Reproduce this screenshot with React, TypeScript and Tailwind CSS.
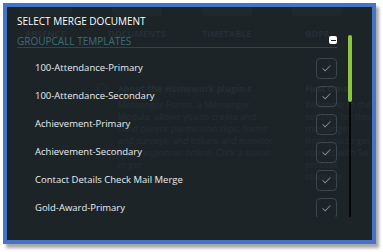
import { Check } from 'lucide-react';

const templates = [
  '100-Attendance-Primary',
  '100-Attendance-Secondary',
  'Achievement-Primary',
  'Achievement-Secondary',
  'Contact Details Check Mail Merge',
  'Gold-Award-Primary',
];

const font = { fontFamily: '"Open Sans", "Noto Sans", sans-serif' };

// faint page that shows through the dialog
const BackgroundPage = () => (
  <div className="absolute inset-0 text-[#252f35] pointer-events-none">
    <div className="flex gap-[40px] pl-[13px] pt-0">
      <div className="w-[52px] h-[9px] bg-[#1f282d] rounded-b-sm" />
      <div className="w-[50px] h-[9px] bg-[#1f282d] rounded-b-sm" />
      <div className="w-[50px] h-[9px] bg-[#1f282d] rounded-b-sm" />
      <div className="w-[50px] h-[9px] bg-[#1f282d] rounded-b-sm" />
    </div>
    <div className="flex text-[9px] font-bold uppercase pl-[18px] mt-[13px] leading-[10px]">
      <span className="w-[83px]">Absence</span>
      <span className="w-[94px]">Documents</span>
      <span className="w-[103px]">Timetable</span>
      <span>GDPR</span>
    </div>
    <div className="flex mt-[44px] pl-[90px]">
      <div className="w-[10px] h-[10px] rounded-full border border-[#252f35] mr-[11px]" />
      <div className="w-[165px] text-[9px] leading-[12px]">
        <div className="font-bold">About the Homework plugin-t</div>
        <div className="mt-[4px]">Messenger Forms, a Messenger Module, allows you to create and send parent permission slips, forms and surveys, and collate and monitor their responses online. Click a status to get</div>
      </div>
      <div className="ml-[30px] text-[9px] leading-[12px] w-[70px]">
        <div className="font-bold">First time?</div>
        <div className="mt-[4px]">Welcome to the settings for this messenger from you to get started with Se process students</div>
      </div>
    </div>
  </div>
);

const App = () => {
  return (
    <div className="w-[383px] h-[252px] bg-white relative" style={font}>
      <div className="absolute left-[3px] top-[3px] w-[373px] h-[241px] border-4 border-[#4673c6] bg-[#1c2428] shadow-[3px_4px_3px_rgba(0,0,0,0.35)] overflow-hidden">
        <BackgroundPage />
        <div className="relative">
          <div className="pt-[8px] px-[10px]">
            <h2 className="text-[10px] leading-[12px] text-white uppercase">Select Merge Document</h2>
          </div>
          <div className="flex mt-[8px] pl-[10px]">
            <div className="w-[320px]">
              <div className="flex items-center justify-between h-[13px] border-b border-[#364247]">
                <span className="text-[10px] leading-[12px] uppercase text-[#3e6c78]">Groupcall Templates</span>
                <span className="w-[8px] h-[8px] bg-white rounded-[2px] flex items-center justify-center mb-[2px]">
                  <span className="w-[5px] h-[1px] bg-[#1c2428]" />
                </span>
              </div>
              <div className="mt-[6px] h-[163px] overflow-hidden">
                {templates.map((name) => (
                  <div key={name} className="flex items-center justify-between h-[28px] pl-[18px]">
                    <span className="text-[9.5px] text-[#e8ecee]">{name}</span>
                    <span className="w-[21px] h-[21px] rounded-[4px] border border-[#3a464b] flex items-center justify-center">
                      <Check size={11} strokeWidth={2.2} className="text-[#7f888d]" />
                    </span>
                  </div>
                ))}
              </div>
            </div>
            <div className="ml-[11px] w-[4px] h-[182px] relative">
              <div className="absolute left-[1px] top-0 w-[2px] h-full bg-[#050708]" />
              <div className="absolute left-0 top-0 w-[4px] h-[67px] rounded-[2px] bg-[#8cc63f]" />
            </div>
          </div>
        </div>
      </div>
    </div>
  );
};

export default App;
